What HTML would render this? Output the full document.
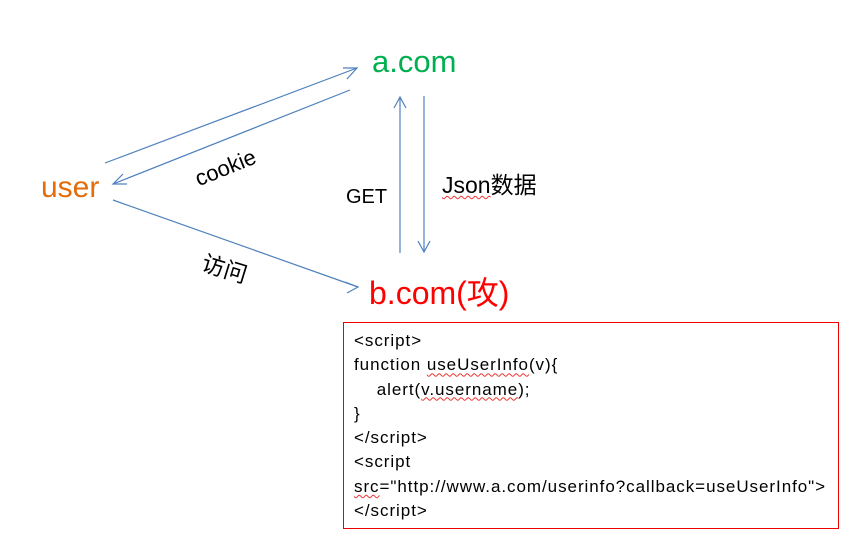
<!DOCTYPE html>
<html><head><meta charset="utf-8"><style>
body{margin:0;width:846px;height:542px;background:#fff;overflow:hidden;position:relative;font-family:"Liberation Sans","Noto Sans CJK SC",sans-serif}
.t{position:absolute;white-space:nowrap}
.box{position:absolute;left:343px;top:322px;width:494px;height:205px;border:1px solid #e00;}
.code{position:absolute;left:354px;top:329px;font-size:17px;letter-spacing:0.95px;line-height:24.3px;color:#000}
.sq{text-decoration:underline wavy #e33;text-decoration-thickness:1px;text-underline-offset:2px}
</style></head><body>
<svg width="846" height="542" style="position:absolute;left:0;top:0">
<g stroke="#4f81bd" stroke-width="1.2" fill="none">
<line x1="105" y1="163" x2="357" y2="68"/><polyline points="343,68 357,68 347,79"/>
<line x1="350" y1="90" x2="113" y2="184"/><polyline points="123,174 113,184 127,184"/>
<line x1="113" y1="200" x2="358" y2="287"/><polyline points="345,282 358,287 347,293"/>
<line x1="400" y1="253" x2="400" y2="97"/><polyline points="394,108 400,97 406,108"/>
<line x1="424" y1="96" x2="424" y2="252"/><polyline points="418,241 424,252 430,241"/>
</g></svg>
<div class="t" style="left:372px;top:44px;font-size:31px;color:#00b050">a.com</div>
<div class="t" style="left:41px;top:171px;font-size:30px;color:#e46c0a">user</div>
<div class="t" style="left:369px;top:268px;font-size:32px;color:#f00">b.com(攻)</div>
<div class="t" style="left:201px;top:166px;font-size:22px;transform:rotate(-22deg);transform-origin:left bottom">cookie</div>
<div class="t" style="left:208px;top:244px;font-size:23px;transform:rotate(17deg);transform-origin:left top">访问</div>
<div class="t" style="left:346px;top:186px;font-size:20px">GET</div>
<div class="t" style="left:442px;top:166px;font-size:23px"><span class="sq">Json</span>数据</div>
<div class="box"></div>
<div class="code">
&lt;script&gt;<br>
function <span class="sq">useUserInfo</span>(v){<br>
&nbsp;&nbsp;&nbsp;&nbsp;alert(<span class="sq">v.username</span>);<br>
}<br>
&lt;/script&gt;<br>
&lt;script<br>
<span class="sq">src</span>="http://www.a.com/userinfo?callback=useUserInfo"&gt;<br>
&lt;/script&gt;
</div>
</body></html>
